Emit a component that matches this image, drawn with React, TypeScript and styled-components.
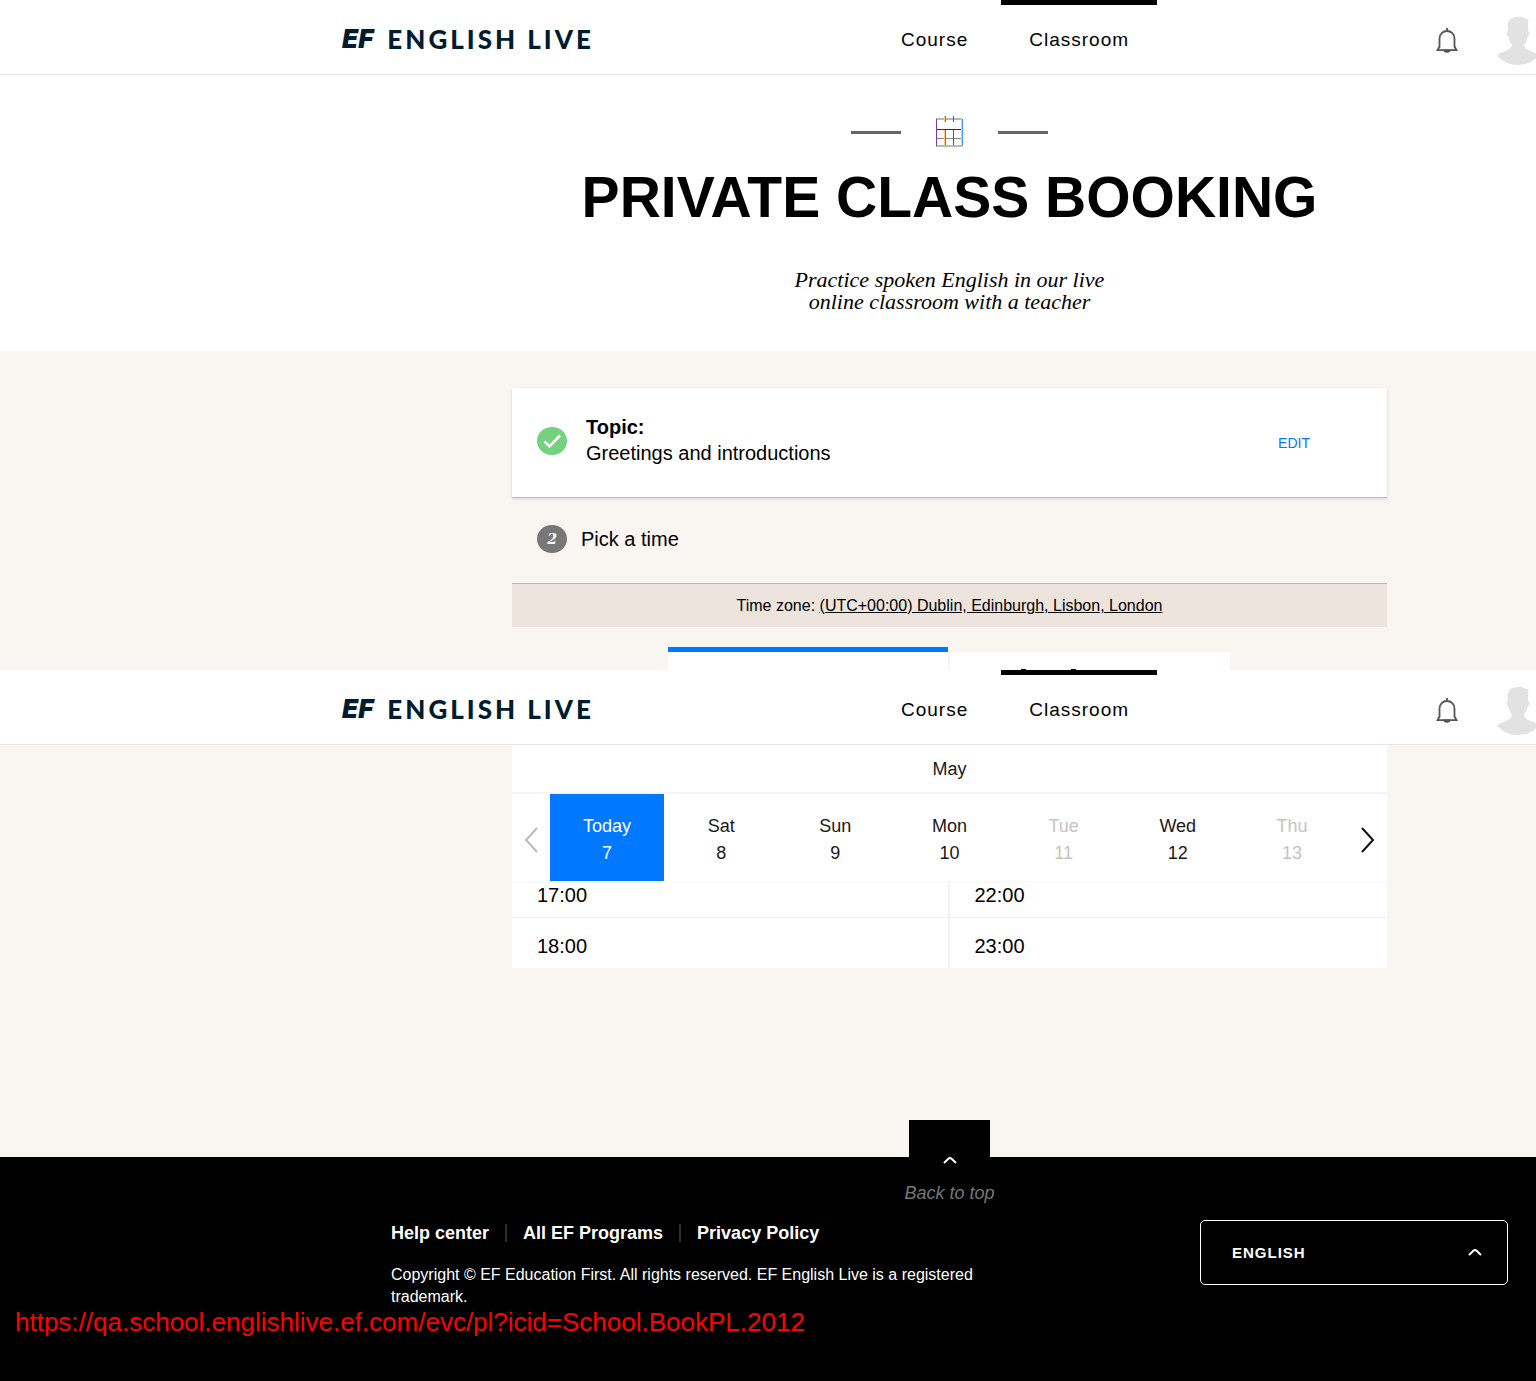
import React from "react";
import styled, { createGlobalStyle } from "styled-components";

const GlobalStyle = createGlobalStyle`
  *, *::before, *::after { box-sizing: border-box; }
  body {
    margin: 0;
    background: #000;
    color: #000;
    font-family: "Liberation Sans", Arial, sans-serif;
    font-size: 20px;
    line-height: 24px;
    overflow-x: hidden;
  }
  button, select { font: inherit; color: inherit; border: 0; background: none; padding: 0; margin: 0; cursor: pointer; }
  h1, p, ul { margin: 0; padding: 0; }
  ul { list-style: none; }
  a { color: inherit; text-decoration: none; }
`;

const Page = styled.div`
  background: #f9f5f0;
`;

/* ---------- top bar ---------- */

const Bar = styled.header`
  display: flex;
  height: 75px;
  padding-left: 342px;
  background: #fff;
  border-bottom: 1px solid #e6e6e6;
  overflow: hidden;
`;

const Brand = styled.a`
  display: flex;
  align-items: center;
  gap: 14px;
  width: 531px;
  padding-top: 4px;
  color: #001c2e;
  font-family: Lato, "Liberation Sans", sans-serif;
  font-size: 26px;
  font-weight: 900;
  letter-spacing: 3px;
  white-space: nowrap;
`;

const BrandMark = styled.span`
  font-family: Inter, "Liberation Sans", sans-serif;
  font-size: 26px;
  font-style: italic;
  letter-spacing: 0;
`;

const Nav = styled.nav`
  display: flex;
  gap: 5px;
`;

const NavLink = styled.a<{ $active?: boolean }>`
  padding: 23px 28px 0;
  border-top: 5px solid ${(p) => (p.$active ? "#000" : "transparent")};
  font-size: 19px;
  letter-spacing: 1px;
`;

const Tools = styled.div`
  display: flex;
  gap: 39px;
  margin: 16px -5px 0 auto;
`;

const IconButton = styled.button`
  display: flex;
  align-items: flex-start;
`;

const Bell = styled.svg`
  width: 22px;
  height: 26px;
  margin-top: 12px;
`;

const Avatar = styled.svg`
  width: 44px;
  height: 50px;
`;

/* ---------- hero ---------- */

const Hero = styled.section`
  display: flex;
  flex-direction: column;
  align-items: center;
  padding: 41px 0 38px 363px;
  background: #fff;
`;

const Ornament = styled.div`
  display: flex;
  align-items: center;
  gap: 34px;
`;

const Dash = styled.span`
  width: 50px;
  height: 3px;
  background: #666;
`;

const Calendar = styled.svg`
  width: 29px;
  height: 32px;
`;

const Title = styled.h1`
  margin-top: 17px;
  font-size: 57px;
  line-height: 64px;
  white-space: nowrap;
`;

const Lead = styled.p`
  margin-top: 40px;
  font-family: Georgia, "Liberation Serif", serif;
  font-size: 22px;
  font-style: italic;
  line-height: 22px;
  text-align: center;
`;

/* ---------- booking column ---------- */

const Column = styled.main<{ $top?: number }>`
  display: flex;
  flex-direction: column;
  align-items: center;
  padding: ${(p) => p.$top ?? 0}px 0 0 363px;
`;

const Panel = styled.div`
  width: 100%;
  max-width: 875px;
`;

const TopicCard = styled.section`
  display: flex;
  align-items: center;
  height: 110px;
  padding: 0 77px 0 25px;
  background: #fff;
  border-bottom: 1px solid #bbb;
  box-shadow: 0 1px 3px rgba(0, 0, 0, 0.14);
`;

const StepIcon = styled.svg`
  width: 30px;
  height: 28px;
  margin-bottom: 3px;
`;

const Topic = styled.p`
  flex: 1;
  margin-left: 19px;
  padding-bottom: 5px;
  line-height: 26px;
`;

const TopicLabel = styled.strong`
  display: block;
`;

const EditButton = styled.button`
  color: #0078ff;
  font-size: 14px;
`;

const Step = styled.div`
  display: flex;
  align-items: center;
  gap: 14px;
  height: 85px;
  padding: 0 25px 4px;
`;

const StepNumber = styled.span`
  display: grid;
  place-items: center;
  width: 30px;
  height: 28px;
  border-radius: 50%;
  background: #777;
  color: #fff;
  font-family: "DejaVu Serif", serif;
  font-size: 14px;
  font-style: italic;
  font-weight: bold;
`;

const Zone = styled.p`
  padding: 10px 0 9px;
  border-top: 1px solid #bbb;
  background: #ede4de;
  font-size: 16px;
  text-align: center;
`;

const ZoneLink = styled.a`
  text-decoration: underline;
`;

const Tabs = styled.div`
  display: flex;
  justify-content: center;
  align-items: flex-end;
  margin-top: 20px;
  padding-right: 1px;
`;

const Tab = styled.button<{ $active?: boolean }>`
  display: flex;
  align-items: flex-end;
  gap: 45px;
  width: 280px;
  height: ${(p) => (p.$active ? 23 : 18)}px;
  padding-left: 71px;
  border-top: ${(p) => (p.$active ? "5px solid #0078ff" : "0")};
  background: #fff;
`;

const TabRule = styled.span`
  width: 2px;
  height: 18px;
  background: #f3f3f3;
`;

const TabTip = styled.span`
  width: 5px;
  height: 1px;
  background: #000;
`;

/* ---------- calendar ---------- */

const Month = styled.p`
  padding: 12px 0 11px;
  border-bottom: 2px solid #f5f5f5;
  background: #fff;
  color: #191919;
  font-size: 18px;
  text-align: center;
`;

const Week = styled.div`
  display: flex;
  height: 89px;
  background: #fff;
  border-bottom: 2px solid #fafafa;
`;

const Arrow = styled.button`
  display: grid;
  place-items: center;
  flex: 0 0 38px;
  padding-top: 5px;
`;

const Day = styled.button<{ $state?: "on" | "off" }>`
  flex: 1;
  padding-top: 5px;
  font-size: 18px;
  line-height: 27px;
  background: ${(p) => (p.$state === "on" ? "#0078ff" : "#fff")};
  color: ${(p) => (p.$state === "on" ? "#fff" : p.$state === "off" ? "#c4c4c4" : "#191919")};
`;

const DayPart = styled.span`
  display: block;
`;

const Slots = styled.div`
  display: grid;
  grid-template-columns: 1fr 1fr;
  background: #fff;
`;

const Slot = styled.button<{ $cut?: boolean; $left?: boolean }>`
  display: flex;
  align-items: flex-start;
  height: ${(p) => (p.$cut ? 35 : 50)}px;
  padding: ${(p) => (p.$cut ? 0 : 16)}px 25px 0;
  border-bottom: ${(p) => (p.$cut ? "1px solid #f0f0f0" : "0")};
  border-right: ${(p) => (p.$left ? "2px solid #f3f3f3" : "0")};
`;

/* ---------- footer ---------- */

const TopLink = styled.a`
  width: 81px;
  height: 37px;
  background: #000;
`;

const Footer = styled.footer`
  background: #000;
  color: #fff;
  padding-bottom: 44px;
`;

const BackToTop = styled.a`
  display: flex;
  flex-direction: column;
  align-items: center;
  gap: 17px;
  padding-left: 363px;
  color: #777;
  font-size: 18px;
  font-style: italic;
`;

const FooterRow = styled.div`
  display: flex;
  justify-content: space-between;
  align-items: flex-start;
  padding: 15px 28px 0 391px;
`;

const Legal = styled.div`
  width: 600px;
`;

const Links = styled.ul`
  display: flex;
  align-items: center;
  font-size: 18px;
  font-weight: bold;
  line-height: 26px;
`;

const LinkItem = styled.li`
  display: flex;
  align-items: center;
  white-space: nowrap;

  & + &::before {
    content: "";
    width: 2px;
    height: 18px;
    margin: 0 16px;
    background: #2b2f30;
  }
`;

const Copyright = styled.p`
  margin-top: 18px;
  font-size: 16px;
  line-height: 22px;
`;

const Language = styled.label`
  display: grid;
  align-items: center;
  width: 308px;
  height: 65px;
  border: 1px solid #fff;
  border-radius: 5px;
`;

const LanguageSelect = styled.select`
  grid-area: 1 / 1;
  height: 100%;
  padding: 0 31px;
  appearance: none;
  font-size: 15px;
  font-weight: bold;
  letter-spacing: 1px;
`;

const LanguageCaret = styled.span`
  grid-area: 1 / 1;
  justify-self: end;
  display: flex;
  margin-right: 25px;
  pointer-events: none;
`;

const Address = styled.a`
  display: inline-block;
  margin-left: 15px;
  color: #f00;
  font-size: 26px;
  line-height: 28px;
`;

function Caret() {
  return (
    <svg width="14" height="7" viewBox="0 0 14 7" fill="none" stroke="#fff" strokeWidth="2" aria-hidden="true">
      <path d="M1 6 L5.6 1.6 Q7 .6 8.4 1.6 L13 6" />
    </svg>
  );
}

function SiteBar() {
  return (
    <Bar>
      <Brand href="#home">
        <BrandMark>EF</BrandMark>
        <span>ENGLISH LIVE</span>
      </Brand>
      <Nav>
        <NavLink href="#course">Course</NavLink>
        <NavLink href="#classroom" $active>Classroom</NavLink>
      </Nav>
      <Tools>
        <IconButton aria-label="Notifications">
          <Bell viewBox="0 0 22 26" fill="none" stroke="#555" strokeWidth="1.8">
            <path d="M11 0v3M3.500 19.500V10.500a7.500 7.500 0 0 1 15 0V19.500M3.500 18.500L1.500 22.200h19L18.500 18.500" />
            <path d="M8.600 22.500h4.800c0 1.800-4.800 1.800-4.800 0z" fill="#444" />
          </Bell>
        </IconButton>
        <IconButton aria-label="Account">
          <Avatar viewBox="0 0 44 50" fill="#e2e2e2">
            <path d="M21 1C25 0 28 3 31.500 3.500C30.500 7 31.200 11 31 15C33.500 15 32.500 20 30.500 21C30 24 29 26 27.500 28C27 31 28.500 33 31 34C35 35.500 39 37 41.500 39.500C37 45 30 49 21 49S5 45 0 39.500C3 37 7 35.500 11 34C13.500 33 15 31 14.500 28C13 26 12 24 11.500 21C9.500 20 8.500 15 11 15C10.500 10 10 6 13 3.500C15 1.800 18 1.200 21 1Z" />
          </Avatar>
        </IconButton>
      </Tools>
    </Bar>
  );
}

const days: { name: string; date: number; state?: "on" | "off" }[] = [
  { name: "Today", date: 7, state: "on" },
  { name: "Sat", date: 8 },
  { name: "Sun", date: 9 },
  { name: "Mon", date: 10 },
  { name: "Tue", date: 11, state: "off" },
  { name: "Wed", date: 12 },
  { name: "Thu", date: 13, state: "off" },
];

export default function App() {
  return (
    <Page>
      <GlobalStyle />
      <SiteBar />
      <Hero>
        <Ornament>
          <Dash />
          <Calendar viewBox="0 0 29 32" fill="none" shapeRendering="crispEdges">
            <path d="M1 3H27M1 30H27" stroke="#b8b8b8" strokeWidth="2" />
            <path d="M1 13.500H27" stroke="#333" />
            <path d="M1 22.500H27" stroke="#8a8a8a" />
            <path d="M1.500 3V30M18.500 0V6M18.500 14V29" stroke="#7b3f98" />
            <path d="M9.500 0V6M9.500 14V29M26.500 3V29" stroke="#ffc78a" />
            <path d="M10.500 0V6M10.500 14V29" stroke="#4b82b8" />
            <path d="M27.500 3V30" stroke="#3c9fe8" />
          </Calendar>
          <Dash />
        </Ornament>
        <Title>PRIVATE CLASS BOOKING</Title>
        <Lead>
          Practice spoken English in our live
          <br />
          online classroom with a teacher
        </Lead>
      </Hero>

      <Column $top={37}>
        <Panel>
          <TopicCard>
            <StepIcon viewBox="0 0 30 28" aria-hidden="true">
              <ellipse cx="15" cy="14" rx="15" ry="14" fill="#74d17f" />
              <path d="M7.500 14.500l5 5L23 8.500" fill="none" stroke="#fff" strokeWidth="2.600" />
            </StepIcon>
            <Topic>
              <TopicLabel>Topic:</TopicLabel>
              Greetings and introductions
            </Topic>
            <EditButton>EDIT</EditButton>
          </TopicCard>
          <Step>
            <StepNumber>2</StepNumber>
            Pick a time
          </Step>
          <Zone>
            Time zone: <ZoneLink href="#timezone">(UTC+00:00) Dublin, Edinburgh, Lisbon, London</ZoneLink>
          </Zone>
          <Tabs role="tablist">
            <Tab $active role="tab" aria-selected="true" aria-label="By time" />
            <TabRule />
            <Tab role="tab" aria-selected="false" aria-label="By teacher">
              <TabTip />
              <TabTip />
            </Tab>
          </Tabs>
        </Panel>
      </Column>

      <SiteBar />

      <Column as="section">
        <Panel>
          <Month>May</Month>
          <Week>
            <Arrow aria-label="Previous week">
              <svg width="14" height="26" viewBox="0 0 14 26" fill="none" stroke="#bbb" strokeWidth="2">
                <path d="M13 1L2 13l11 12" />
              </svg>
            </Arrow>
            {days.map((d) => (
              <Day key={d.date} $state={d.state}>
                <DayPart>{d.name}</DayPart>
                <DayPart>{d.date}</DayPart>
              </Day>
            ))}
            <Arrow aria-label="Next week">
              <svg width="14" height="26" viewBox="0 0 14 26" fill="none" stroke="#111" strokeWidth="2">
                <path d="M1 1l11 12L1 25" />
              </svg>
            </Arrow>
          </Week>
          <Slots>
            <Slot $cut $left>17:00</Slot>
            <Slot $cut>22:00</Slot>
            <Slot $left>18:00</Slot>
            <Slot>23:00</Slot>
          </Slots>
        </Panel>
      </Column>
      <Column as="div" $top={152}>
        <TopLink href="#top" aria-label="Back to top" />
      </Column>

      <Footer>
        <BackToTop href="#top">
          <Caret />
          Back to top
        </BackToTop>
        <FooterRow>
          <Legal>
            <Links>
              <LinkItem><a href="#help">Help center</a></LinkItem>
              <LinkItem><a href="#programs">All EF Programs</a></LinkItem>
              <LinkItem><a href="#privacy">Privacy Policy</a></LinkItem>
            </Links>
            <Copyright>
              Copyright © EF Education First. All rights reserved. EF English Live is a registered trademark.
            </Copyright>
          </Legal>
          <Language>
            <LanguageSelect aria-label="Language" defaultValue="en">
              <option value="en">ENGLISH</option>
            </LanguageSelect>
            <LanguageCaret>
              <Caret />
            </LanguageCaret>
          </Language>
        </FooterRow>
        <Address href="#booking">https://qa.school.englishlive.ef.com/evc/pl?icid=School.BookPL.2012</Address>
      </Footer>
    </Page>
  );
}
